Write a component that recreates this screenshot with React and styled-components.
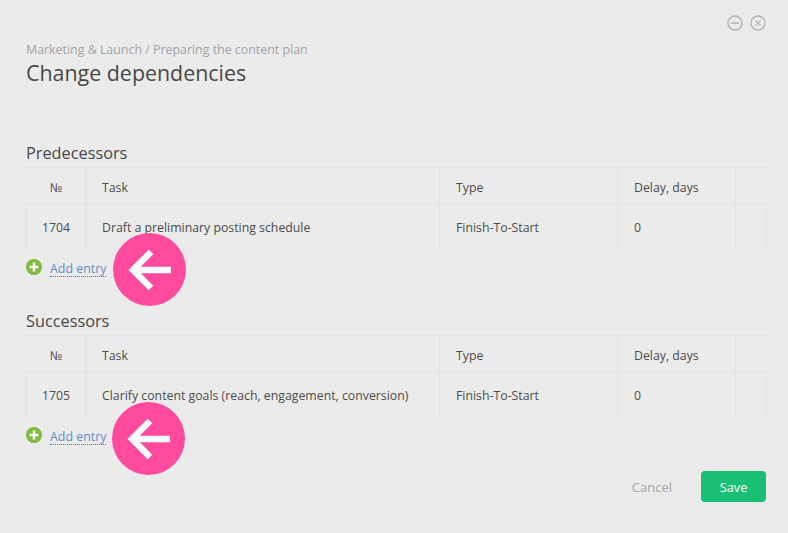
import React from 'react'
import styled, { createGlobalStyle } from 'styled-components'

const GlobalStyle = createGlobalStyle`
  html, body {
    margin: 0;
    padding: 0;
    background: #ebebeb;
  }
  body {
    font-family: "Open Sans", "Noto Sans", "Liberation Sans", sans-serif;
    color: #444;
  }
`

const Page = styled.div`
  position: relative;
  width: 788px;
  height: 533px;
  overflow: hidden;
  box-sizing: border-box;
  padding: 15px 22px 0 26px;
  background: #ebebeb;
`

const WindowControls = styled.div`
  display: flex;
  justify-content: flex-end;
  gap: 7px;
  height: 18px;
`

const Breadcrumb = styled.div`
  margin-top: 8px;
  height: 17px;
  font-size: 12.4px;
  line-height: 17px;
  color: #a3a3a3;
  white-space: nowrap;
`

const Title = styled.h1`
  margin: 0;
  height: 30px;
  font-size: 21.4px;
  line-height: 30px;
  font-weight: 400;
  color: #484848;
`

const SectionTitle = styled.h2`
  margin: ${p => p.$top}px 0 0;
  height: 24px;
  font-size: 16.3px;
  line-height: 24px;
  font-weight: 400;
  color: #484848;
`

const Table = styled.div`
  margin-top: 2px;
  border-top: 1px solid #e2e2e2;
`

const Row = styled.div`
  display: grid;
  grid-template-columns: 59px 354px 178px 118px 31px;
  height: ${p => (p.$head ? 35 : 44)}px;
  align-items: center;
  border-top: ${p => (p.$head ? '0' : '1px solid #e2e2e2')};
  border-left: 1px solid ${p => (p.$head ? 'transparent' : '#e2e2e2')};
`

const Cell = styled.div`
  box-sizing: border-box;
  height: 100%;
  display: flex;
  align-items: center;
  justify-content: ${p => (p.$center ? 'center' : 'flex-start')};
  padding-left: ${p => (p.$center ? 0 : 16)}px;
  padding-top: ${p => (p.$head ? 3 : 2)}px;
  border-right: 1px solid ${p => (p.$open ? 'transparent' : '#e2e2e2')};
  font-size: 12.3px;
  color: #4c4c4c;
  white-space: nowrap;
`

const AddRow = styled.div`
  display: flex;
  align-items: center;
  gap: 8px;
  height: 38px;
`

const AddLink = styled.a`
  font-size: 12.4px;
  line-height: 15px;
  color: #5f8fc9;
  border-bottom: 1px dotted #3f78c0;
  margin-top: 4px;
`

const Footer = styled.div`
  display: flex;
  justify-content: flex-end;
  align-items: center;
  gap: 29px;
  margin-top: 17px;
`

const CancelButton = styled.span`
  font-size: 13px;
  color: #a5a5a5;
`

const SaveButton = styled.button`
  width: 65px;
  height: 31px;
  border: 0;
  border-radius: 4px;
  background: #1abf76;
  color: #fff;
  font-family: inherit;
  font-size: 12.8px;
  padding: 0;
`

const ArrowBadge = styled.div`
  position: absolute;
  left: ${p => p.$x}px;
  top: ${p => p.$y}px;
  width: 73px;
  height: 73px;
  border-radius: 50%;
  background: #ff4a9e;
  display: flex;
  align-items: center;
  justify-content: center;
`

const MinusIcon = () => (
  <svg width="16" height="16" viewBox="0 0 16 16" fill="none" stroke="#b2b2b2">
    <circle cx="8" cy="8" r="7" strokeWidth="1.4" />
    <path d="M4 8h8" strokeWidth="1.6" />
  </svg>
)

const CloseIcon = () => (
  <svg width="16" height="16" viewBox="0 0 16 16" fill="none" stroke="#b2b2b2">
    <circle cx="8" cy="8" r="7" strokeWidth="1.3" />
    <path d="M5.4 5.4l5.2 5.2M10.6 5.4l-5.2 5.2" strokeWidth="1.2" />
  </svg>
)

const PlusIcon = () => (
  <svg width="16" height="16" viewBox="0 0 16 16">
    <circle cx="8" cy="8" r="8" fill="#7fbb3c" />
    <path d="M8 3.6v8.8M3.6 8h8.8" stroke="#fff" strokeWidth="2.4" />
  </svg>
)

const ArrowIcon = () => (
  <svg width="44" height="44" viewBox="0 0 44 44" fill="none" stroke="#fff" strokeWidth="6.5">
    <path d="M43 22H6" />
    <path d="M23 4L5 22l18 18" />
  </svg>
)

const DependencyTable = ({ id, task }) => (
  <>
    <Table>
      <Row $head>
        <Cell $center $head>№</Cell>
        <Cell $head>Task</Cell>
        <Cell $head>Type</Cell>
        <Cell $head>Delay, days</Cell>
        <Cell $open />
      </Row>
      <Row>
        <Cell $center>{id}</Cell>
        <Cell>{task}</Cell>
        <Cell>Finish-To-Start</Cell>
        <Cell>0</Cell>
        <Cell />
      </Row>
    </Table>
    <AddRow>
      <PlusIcon />
      <AddLink>Add entry</AddLink>
    </AddRow>
  </>
)

const App = () => (
  <Page>
    <GlobalStyle />
    <WindowControls>
      <MinusIcon />
      <CloseIcon />
    </WindowControls>
    <Breadcrumb>Marketing &amp; Launch / Preparing the content plan</Breadcrumb>
    <Title>Change dependencies</Title>
    <SectionTitle $top={53}>Predecessors</SectionTitle>
    <DependencyTable id="1704" task="Draft a preliminary posting schedule" />
    <SectionTitle $top={23}>Successors</SectionTitle>
    <DependencyTable id="1705" task="Clarify content goals (reach, engagement, conversion)" />
    <Footer>
      <CancelButton>Cancel</CancelButton>
      <SaveButton>Save</SaveButton>
    </Footer>
    <ArrowBadge $x={113} $y={233}><ArrowIcon /></ArrowBadge>
    <ArrowBadge $x={112} $y={402}><ArrowIcon /></ArrowBadge>
  </Page>
)

export default App
